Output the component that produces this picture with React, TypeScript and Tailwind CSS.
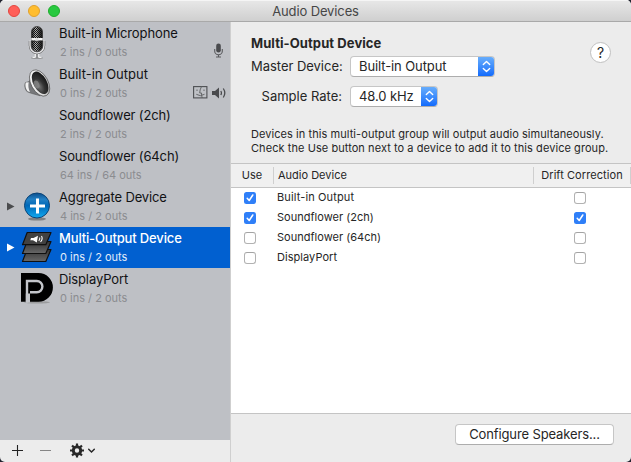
import React from "react";

type Device = {
  name: string;
  info: string;
  icon?: React.ReactNode;
  nameClass: string;
  expandable?: boolean;
  selected?: boolean;
  badge?: React.ReactNode;
};

const MicIcon = () => (
  <svg width="32" height="36" viewBox="0 0 32 36">
    <defs>
      <linearGradient id="micBody" x1="0" x2="1" y1="0" y2="0">
        <stop offset="0" stopColor="#222" />
        <stop offset=".4" stopColor="#bbb" />
        <stop offset=".7" stopColor="#555" />
        <stop offset="1" stopColor="#111" />
      </linearGradient>
      <pattern id="micMesh" width="2" height="2" patternUnits="userSpaceOnUse">
        <rect width="1" height="1" fill="#111" />
        <rect x="1" y="1" width="1" height="1" fill="#111" />
      </pattern>
    </defs>
    <ellipse cx="16" cy="33" rx="6" ry="1" fill="#777" opacity=".6" />
    <path d="M14.3 28v4.3M17.7 28v4.3M11.5 32.4h3M17.5 32.4h3" stroke="#eee" strokeWidth="1.3" />
    <path d="M16 28v4.5" stroke="#777" strokeWidth="1.2" />
    <path d="M9 16v4.5a7 7.5 0 0 0 14 0V16" fill="none" stroke="#555" strokeWidth="2.4" />
    <path d="M9 15.5v5a7 7.5 0 0 0 14 0v-5" fill="none" stroke="#e4e4e6" strokeWidth="1.4" />
    <rect x="10.5" y="1.5" width="11" height="25" rx="5.5" fill="url(#micBody)" stroke="#333" strokeWidth=".8" />
    <rect x="11" y="2" width="10" height="24" rx="5" fill="url(#micMesh)" />
    <path d="M10.3 13h11.4v2.6H10.3z" fill="#f1f1f1" />
    <path d="M14.5 13h3v3.6h-3z" fill="#ddd" />
    <path d="M10.5 16.3h11" stroke="#222" strokeWidth=".8" />
  </svg>
);

const SpeakerIcon = () => (
  <svg width="32" height="34" viewBox="0 0 32 34">
    <defs>
      <linearGradient id="spkRim" x1="0" x2="1" y1="0" y2="1">
        <stop offset="0" stopColor="#fff" />
        <stop offset=".6" stopColor="#ddd" />
        <stop offset="1" stopColor="#999" />
      </linearGradient>
      <radialGradient id="spkCone" cx=".3" cy=".6" r=".7">
        <stop offset="0" stopColor="#777" />
        <stop offset=".5" stopColor="#333" />
        <stop offset="1" stopColor="#181818" />
      </radialGradient>
    </defs>
    <path d="M4.500 16.500c-1.400 2.500-.6 7 1.800 9.300l4 1.500 9 2.500-9-22c-.3 4-1 6.600-2.800 8z" fill="#77787b" stroke="#555" strokeWidth=".6" />
    <path d="M4.800 16.500c-1 3 0 6.500 1.800 8.700l2.400.8c-1.600-3-2-6.500-1.300-9.800z" fill="#f2f2f2" />
    <ellipse cx="18.600" cy="17" rx="8.500" ry="14.300" transform="rotate(-29 18.600 17)" fill="url(#spkRim)" stroke="#555" strokeWidth=".7" />
    <ellipse cx="19.100" cy="16.800" rx="6.700" ry="12.200" transform="rotate(-29 19.100 16.800)" fill="url(#spkCone)" />
    <ellipse cx="15.600" cy="18.500" rx="2.600" ry="4.200" transform="rotate(-20 15.600 18.500)" fill="#888" opacity=".75" />
  </svg>
);

const PlusIcon = () => (
  <svg width="32" height="34" viewBox="0 0 32 34">
    <defs>
      <linearGradient id="plusDisc" x1="0" x2="0" y1="0" y2="1">
        <stop offset="0" stopColor="#0a4d8c" />
        <stop offset=".25" stopColor="#2380c4" />
        <stop offset=".5" stopColor="#0068b8" />
        <stop offset="1" stopColor="#12aaf0" />
      </linearGradient>
    </defs>
    <ellipse cx="16" cy="30" rx="9" ry="1.600" fill="#555" opacity=".6" />
    <circle cx="16" cy="16.500" r="12.500" fill="url(#plusDisc)" stroke="#0b4376" strokeWidth="1" />
    <path d="M16.500 9.500v15M9 17h15" stroke="#fff" strokeWidth="3" />
  </svg>
);

const StackIcon = () => (
  <svg width="32" height="34" viewBox="0 0 32 34">
    <defs>
      <linearGradient id="sheet" x1="0" x2="0" y1="0" y2="1">
        <stop offset="0" stopColor="#333" />
        <stop offset="1" stopColor="#686868" />
      </linearGradient>
    </defs>
    <g fill="url(#sheet)" stroke="#101010" strokeWidth="1.200" strokeLinejoin="round">
      <path d="M6 19.500h24l-5.200 12H1.500z" />
      <path d="M6 11.500h24l-5.200 12H1.500z" />
      <path d="M6.200 2.500H30l-5.200 12.200H1.500z" fill="#414141" />
    </g>
    <path d="M10 8h2.500l4.500-2.300-1.200 6.700-3.800-2.200H9.300z" fill="#fff" />
    <path d="M18.600 7.500q.8 1.700-.8 3.300M20.500 6q1.700 3-1 6" fill="none" stroke="#fff" strokeWidth="1.100" />
  </svg>
);

const DisplayPortIcon = () => (
  <svg width="34" height="34" viewBox="0 0 34 34">
    <ellipse cx="16" cy="31.300" rx="13" ry="1.200" fill="#777" opacity=".5" />
    <path d="M0 2h17.500a14.400 14.400 0 0 1 0 28.800H0z" fill="#000" />
    <path d="M6 31.500V10h9.800a5.500 5.500 0 0 1 0 11.200H9" transform="translate(0 0)" fill="none" stroke="#c3c5ca" strokeWidth="2.400" />
    <path d="M4.800 22.400h4.200v9H4.800z" fill="#c3c5ca" />
  </svg>
);

const Arrow = ({ color }: { color: string }) => (
  <svg width="8" height="9" viewBox="0 0 8 9">
    <path d="M0 0.500l7.500 4-7.500 4z" fill={color} />
  </svg>
);

const SmallMic = () => (
  <svg className="mr-[4px]" width="9" height="15" viewBox="0 0 9 15">
    <rect x="2.200" y=".5" width="4.600" height="9" rx="2.300" fill="#4a4b4e" />
    <path d="M.7 6v2.200a3.800 3.500 0 0 0 7.600 0V6M4.500 12v2M2 14h5" fill="none" stroke="#5a5b5e" strokeWidth="1.100" />
  </svg>
);

const OutputBadges = () => (
  <div className="mr-px flex items-center gap-[4px]">
    <svg width="15" height="13" viewBox="0 0 15 13">
      <rect x=".6" y=".6" width="13.300" height="11.300" fill="none" stroke="#4e4f52" strokeWidth="1.100" />
      <path d="M8.500.5Q6.700 4 6.700 7h1.800q0 3 .7 5M4 3.500v1.500M11 3.500v1.500M3.300 8.300q4 2.800 8.200 0" fill="none" stroke="#5c5d60" strokeWidth=".9" />
    </svg>
    <svg width="14" height="12" viewBox="0 0 14 12">
      <path d="M0 4h3l4-3.500v11L3 8H0z" fill="#4a4b4e" />
      <path d="M8.800 4q1.300 2 0 4M11.300 1.500q3 4.500 0 9" fill="none" stroke="#4a4b4e" strokeWidth="1.300" />
    </svg>
  </div>
);

const devices: Device[] = [
  { name: "Built-in Microphone", info: "2 ins / 0 outs", icon: <MicIcon />, nameClass: "tracking-[-0.1px]", badge: <SmallMic /> },
  { name: "Built-in Output", info: "0 ins / 2 outs", icon: <SpeakerIcon />, nameClass: "tracking-[0px]", badge: <OutputBadges /> },
  { name: "Soundflower (2ch)", info: "2 ins / 2 outs", nameClass: "tracking-[-0.14px]" },
  { name: "Soundflower (64ch)", info: "64 ins / 64 outs", nameClass: "tracking-[-0.14px]" },
  { name: "Aggregate Device", info: "4 ins / 2 outs", icon: <PlusIcon />, nameClass: "tracking-[-0.14px]", expandable: true },
  { name: "Multi-Output Device", info: "0 ins / 2 outs", icon: <StackIcon />, nameClass: "tracking-[-0.15px] font-medium", expandable: true, selected: true },
  { name: "DisplayPort", info: "0 ins / 2 outs", icon: <DisplayPortIcon />, nameClass: "tracking-[-0.12px]" },
];

const DeviceRow = ({ d }: { d: Device }) => (
  <div className={`flex h-[41px] pr-[3px] ${d.selected ? "bg-[#0160d0] text-white" : "text-[#111214]"}`}>
    <div className="flex w-[21px] items-center pl-[7px]">
      {d.expandable && <Arrow color={d.selected ? "#fff" : "#4b4c4e"} />}
    </div>
    <div className="flex w-[38px] items-start pt-[3px]">{d.icon}</div>
    <div className="flex flex-1 flex-col whitespace-nowrap pt-[3px]">
      <div className={`text-[13px] leading-[17px] ${d.nameClass}`}>{d.name}</div>
      <div className={`mt-[3px] pl-px text-[11px] leading-[14px] ${d.selected ? "text-[#e3edfa]" : "text-[#8b8c90]"}`}>{d.info}</div>
    </div>
    <div className="flex items-end pb-[5px]">{d.badge}</div>
  </div>
);

const Popup = ({ label, className }: { label: string; className: string }) => (
  <div className={`flex h-[21px] overflow-hidden rounded-[4px] border border-[#c6c6c6] border-b-[#adadad] bg-white ${className}`}>
    <span className="flex-1 whitespace-nowrap pl-[8px] text-[13px] leading-[19px] tracking-[-0.1px]">{label}</span>
    <span className="-my-px -mr-px flex w-[17px] items-center justify-center bg-linear-to-b from-[#6bb0fb] to-[#0a66fb]">
      <svg width="9" height="13" viewBox="0 0 9 13">
        <path d="M1.300 4.500L4.500 1.500l3.200 3M1.300 8.500l3.200 3 3.200-3" fill="none" stroke="#fff" strokeWidth="1.400" strokeLinecap="round" strokeLinejoin="round" />
      </svg>
    </span>
  </div>
);

const Check = ({ on }: { on: boolean }) =>
  on ? (
    <span className="flex size-[12px] items-center justify-center rounded-[2.5px] bg-[#2f7ff8]">
      <svg width="10" height="10" viewBox="0 0 10 10">
        <path d="M2.200 5.300l2 2.200L7.800 2" fill="none" stroke="#fff" strokeWidth="1.500" strokeLinecap="round" strokeLinejoin="round" />
      </svg>
    </span>
  ) : (
    <span className="size-[12px] rounded-[3px] border border-[#b2b2b2] border-t-[#a4a4a4] bg-white" />
  );

const rows = [
  { name: "Built-in Output", use: true, drift: false, nameClass: "tracking-[0.13px]" },
  { name: "Soundflower (2ch)", use: true, drift: true, nameClass: "tracking-[0.02px]" },
  { name: "Soundflower (64ch)", use: false, drift: false, nameClass: "tracking-[0.02px]" },
  { name: "DisplayPort", use: false, drift: false, nameClass: "tracking-[0.05px]" },
];

export default function App() {
  return (
    <div className="h-[462px] w-[631px] overflow-hidden bg-[#20222e] font-[Inter,'Liberation_Sans',sans-serif] text-[13px] text-[#262626]">
      <div className="flex h-full flex-col overflow-hidden rounded-[5px] bg-[#ececec]">
        <div className="grid h-[22px] shrink-0 grid-cols-[1fr_auto_1fr] items-center border-b border-[#a9a9a9] bg-linear-to-b from-[#e8e8e8] to-[#cfcfcf] shadow-[inset_0_1px_0_#f5f5f5]">
          <div className="flex gap-[8px] pl-[8px]">
            <span className="size-[12px] rounded-full border border-[#e2463f] bg-[#ff5f58]" />
            <span className="size-[12px] rounded-full border border-[#e0a02c] bg-[#ffbd2e]" />
            <span className="size-[12px] rounded-full border border-[#1dad2b] bg-[#28c940]" />
          </div>
          <div className="text-[13px] leading-[20px] tracking-[-0.12px] text-[#464646]">Audio Devices</div>
          <div />
        </div>

        <div className="flex min-h-0 flex-1">
          <div className="flex w-[230px] flex-col">
            <div className="flex-1 bg-[#bec0c5]">
              {devices.map((d) => (
                <DeviceRow key={d.name} d={d} />
              ))}
            </div>
            <div className="flex h-[22px] items-center pl-[12px]">
              <svg width="86" height="16" viewBox="0 0 86 16">
                <path d="M0 7.500h11M5.500 2v11" stroke="#222" strokeWidth="1.100" />
                <path d="M28 7.500h11" stroke="#858585" strokeWidth="1.100" />
                <circle cx="65" cy="7.500" r="3.700" fill="none" stroke="#282828" strokeWidth="3" />
                <path d="M65 .5v3M65 11.500v3M58 7.500h3M69 7.500h3M60.050 2.550l2 2M67.950 10.450l2 2M69.950 2.550l-2 2M62.050 10.450l-2 2" stroke="#282828" strokeWidth="2.200" />
                <path d="M76.700 6.300l2.800 2.700 2.800-2.700" fill="none" stroke="#282828" strokeWidth="1.500" strokeLinecap="round" />
              </svg>
            </div>
          </div>

          <div className="flex flex-1 flex-col border-l border-[#cfcfcf]">
            <div className="flex h-[141px] justify-between pl-[20px] pr-[20px]">
              <div className="flex flex-col whitespace-nowrap pt-[12px]">
                <div className="text-[13px] font-bold leading-[18px] tracking-[0.08px]">Multi-Output Device</div>
                <div className="mt-[4px] flex items-center gap-[8px]">
                  <span className="w-[91px] text-right leading-[21px] tracking-[-0.03px]">Master Device:</span>
                  <Popup label="Built-in Output" className="w-[145px]" />
                </div>
                <div className="mt-[9px] flex items-center gap-[8px]">
                  <span className="w-[91px] text-right leading-[21px]">Sample Rate:</span>
                  <Popup label="48.0 kHz" className="w-[88px]" />
                </div>
                <div className="mt-[20px] w-0 text-[11px] leading-[14px] tracking-[0.065px]">
                  <div>Devices in this multi-output group will output audio simultaneously.</div>
                  <div>Check the Use button next to a device to add it to this device group.</div>
                </div>
              </div>
              <div className="mt-[20px] size-[21px] shrink-0 rounded-full border border-[#c0c0c0] bg-white text-center text-[14px] leading-[20px]">?</div>
            </div>

            <div className="flex h-[251px] flex-col border-y border-[#c4c4c4] bg-white text-[11px]">
              <div className="flex h-[24px] items-center border-b border-[#c4c4c4] bg-[#f0f0f0]">
                <div className="flex h-[17px] w-[43px] items-center justify-center border-r border-[#cfcfcf]">Use</div>
                <div className="flex-1 pl-[4px]">Audio Device</div>
                <div className="flex h-[17px] w-[98px] items-center justify-center whitespace-nowrap border-x border-[#cfcfcf] tracking-[0.08px]">Drift Correction</div>
              </div>
              {rows.map((r) => (
                <div key={r.name} className="flex h-[20px] items-center pl-[13px] pr-[45px]">
                  <Check on={r.use} />
                  <span className={`flex-1 pb-[2px] pl-[21px] leading-[16px] ${r.nameClass}`}>{r.name}</span>
                  <Check on={r.drift} />
                </div>
              ))}
            </div>

            <div className="flex justify-end pr-[17px] pt-[10px]">
              <div className="h-[21px] w-[159px] whitespace-nowrap rounded-[4px] border border-[#c6c6c6] border-b-[#adadad] bg-white text-center text-[13px] leading-[19px] tracking-[-0.12px]">Configure Speakers...</div>
            </div>
          </div>
        </div>
      </div>
    </div>
  );
}
